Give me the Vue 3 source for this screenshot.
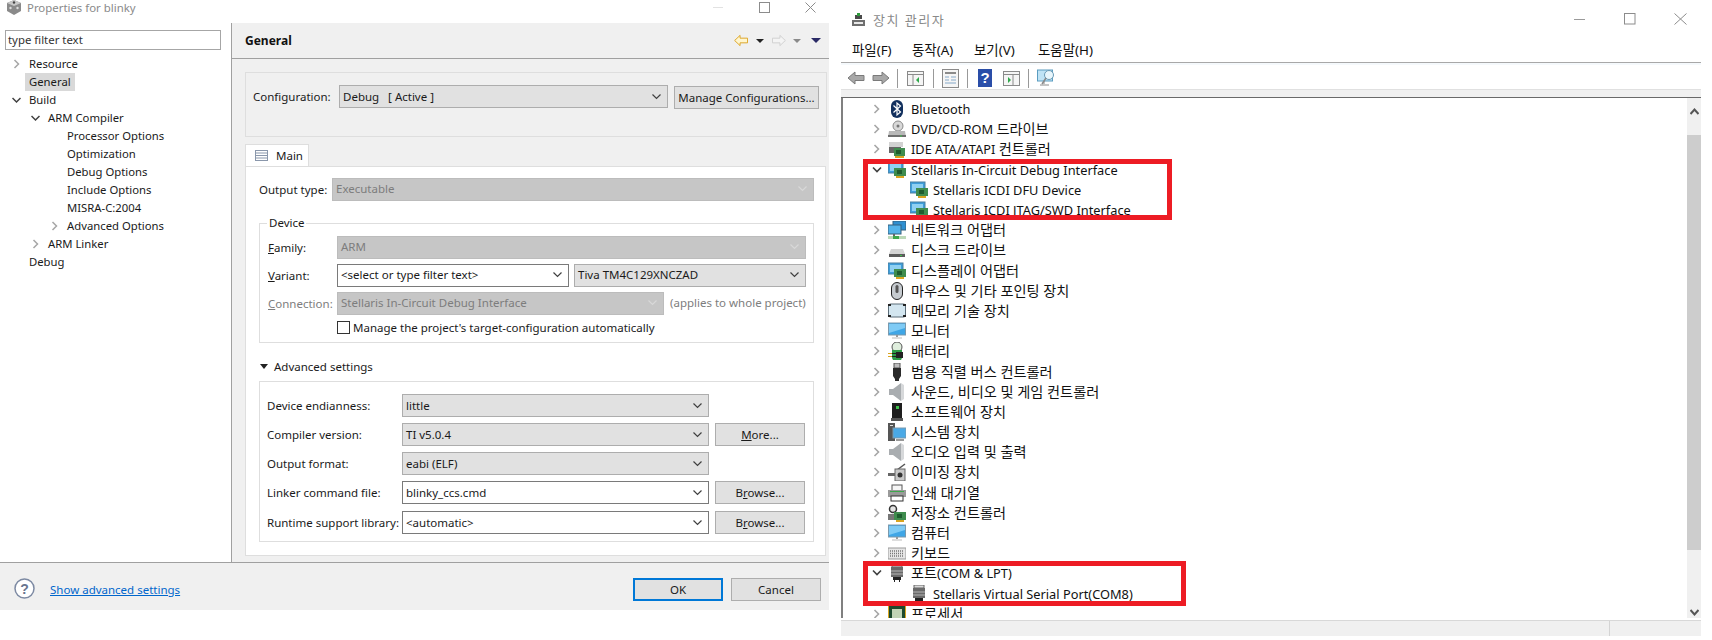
<script setup>
const tree = [
  { t: 'Resource', d: 0, c: 'r' },
  { t: 'General', d: 0, sel: true },
  { t: 'Build', d: 0, c: 'd' },
  { t: 'ARM Compiler', d: 1, c: 'd' },
  { t: 'Processor Options', d: 2 },
  { t: 'Optimization', d: 2 },
  { t: 'Debug Options', d: 2 },
  { t: 'Include Options', d: 2 },
  { t: 'MISRA-C:2004', d: 2 },
  { t: 'Advanced Options', d: 2, c: 'r' },
  { t: 'ARM Linker', d: 1, c: 'r' },
  { t: 'Debug', d: 0 }
]
const adv = [
  { l: 'Device endianness:', v: 'little', k: 'sel' },
  { l: 'Compiler version:', v: 'TI v5.0.4', k: 'sel', b: 'More' },
  { l: 'Output format:', v: 'eabi (ELF)', k: 'sel' },
  { l: 'Linker command file:', v: 'blinky_ccs.cmd', k: 'inp', b: 'Browse' },
  { l: 'Runtime support library:', v: '<automatic>', k: 'inp', b: 'Browse' }
]
const menus = ['파일(F)', '동작(A)', '보기(V)', '도움말(H)']
const devices = [
  { t: 'Bluetooth', i: 'bt' },
  { t: 'DVD/CD-ROM 드라이브', i: 'dvd' },
  { t: 'IDE ATA/ATAPI 컨트롤러', i: 'ide' },
  { t: 'Stellaris In-Circuit Debug Interface', i: 'card', open: true },
  { t: 'Stellaris ICDI DFU Device', i: 'card', child: true },
  { t: 'Stellaris ICDI JTAG/SWD Interface', i: 'card', child: true },
  { t: '네트워크 어댑터', i: 'net' },
  { t: '디스크 드라이브', i: 'disk' },
  { t: '디스플레이 어댑터', i: 'card' },
  { t: '마우스 및 기타 포인팅 장치', i: 'mouse' },
  { t: '메모리 기술 장치', i: 'mem' },
  { t: '모니터', i: 'mon' },
  { t: '배터리', i: 'bat' },
  { t: '범용 직렬 버스 컨트롤러', i: 'usb' },
  { t: '사운드, 비디오 및 게임 컨트롤러', i: 'spk' },
  { t: '소프트웨어 장치', i: 'soft' },
  { t: '시스템 장치', i: 'sys' },
  { t: '오디오 입력 및 출력', i: 'spk' },
  { t: '이미징 장치', i: 'cam' },
  { t: '인쇄 대기열', i: 'prn' },
  { t: '저장소 컨트롤러', i: 'stor' },
  { t: '컴퓨터', i: 'mon' },
  { t: '키보드', i: 'kbd' },
  { t: '포트(COM & LPT)', i: 'port', open: true },
  { t: 'Stellaris Virtual Serial Port(COM8)', i: 'port', child: true },
  { t: '프로세서', i: 'cpu' }
]
const segs = (t) => t.split(/([\uAC00-\uD7A3][\uAC00-\uD7A3 ,]*)/).filter(Boolean).map((s) => ({ s, ko: /[\uAC00-\uD7A3]/.test(s) }))
</script>

<template>
  <div class="page">
    <section class="props">
      <header class="titlebar">
        <svg class="logo" width="16" height="15" viewBox="0 0 16 15"><path d="M8 0l7 3v8l-7 4-7-4V3z" fill="#8a8a8a"/><path d="M8 6L1 3l7-3 7 3z" fill="#c8c8c8"/><circle cx="8" cy="2.5" r="1.2" fill="#444"/><circle cx="4.5" cy="8" r="1.2" fill="#ddd"/><circle cx="11.5" cy="8" r="1.2" fill="#ddd"/></svg>
        <span class="title-text">Properties for blinky</span>
        <div class="winctl">
          <svg width="11" height="11" viewBox="0 0 11 11"><path d="M0 5.5h10" stroke="#e2e2e2"/></svg>
          <svg width="11" height="11" viewBox="0 0 11 11"><rect x=".5" y=".5" width="10" height="10" fill="none" stroke="#8c8c8c"/></svg>
          <svg width="11" height="11" viewBox="0 0 11 11"><path d="M.5.5l10 10M10.5.5l-10 10" stroke="#8c8c8c"/></svg>
        </div>
      </header>
      <div class="main">
        <aside class="nav">
          <div class="filter">type filter text</div>
          <ul class="ptree">
            <li v-for="n in tree" :key="n.t" class="pnode" :class="'d' + n.d">
              <svg v-if="n.c === 'r'" class="tw" width="9" height="10" viewBox="0 0 9 10"><path d="M2.5 1l4 4-4 4" fill="none" stroke="#a6a6a6" stroke-width="1.5"/></svg>
              <svg v-else-if="n.c === 'd'" class="tw" width="9" height="10" viewBox="0 0 9 10"><path d="M.5 3l4 4 4-4" fill="none" stroke="#404040" stroke-width="1.5"/></svg>
              <span class="tw" v-else></span>
              <span class="plabel" :class="{ sel: n.sel }">{{ n.t }}</span>
            </li>
          </ul>
        </aside>
        <div class="pane">
          <div class="pane-head">
            <strong>General</strong>
            <div class="nav-icons">
              <svg width="14" height="13" viewBox="0 0 15 13"><path d="M.7 6.5L6.5 1v3h8v5h-8v3z" fill="#fff6cf" stroke="#dca21f"/></svg>
              <i class="drop"></i>
              <svg class="fwd" width="14" height="13" viewBox="0 0 15 13"><path d="M14.3 6.5L8.5 1v3h-8v5h8v3z" fill="#f4f4f4" stroke="#cfcfcf"/></svg>
              <i class="drop grey"></i>
              <i class="drop navy"></i>
            </div>
          </div>
          <div class="pane-body">
            <div class="config">
              <span class="config-label">Configuration:</span>
              <div class="field gray config-sel"><span>Debug&nbsp;&nbsp;&nbsp;[ Active ]</span><svg class="cv" width="9" height="6" viewBox="0 0 9 6"><path d="M.5.5l4 4 4-4" fill="none" stroke="#404040" stroke-width="1.2"/></svg></div>
              <button class="btn config-btn">Manage Configurations...</button>
            </div>
            <div class="tabs"><div class="tab">
              <svg width="13" height="11" viewBox="0 0 13 11"><rect x=".5" y=".5" width="12" height="10" fill="#fff" stroke="#8a97ab"/><path d="M1 3h11M1 5.500h11M1 8h11" stroke="#8a97ab"/></svg>
              <span>Main</span></div></div>
            <div class="panel">
              <div class="out-row">
                <span class="out-label">Output type:</span>
                <div class="field dis out-sel"><span>Executable</span><svg class="cv" width="9" height="6" viewBox="0 0 9 6"><path d="M.5.5l4 4 4-4" fill="none" stroke="#d8d8d8" stroke-width="1.2"/></svg></div>
              </div>
              <div class="group device">
                <span class="legend">Device</span>
                <div class="dev-grid">
                  <span class="lbl"><u>F</u>amily:</span>
                  <div class="field dis span2"><span>ARM</span><svg class="cv" width="9" height="6" viewBox="0 0 9 6"><path d="M.5.5l4 4 4-4" fill="none" stroke="#d8d8d8" stroke-width="1.2"/></svg></div>
                  <span class="lbl"><u>V</u>ariant:</span>
                  <div class="variant">
                    <div class="field white v1"><span>&lt;select or type filter text&gt;</span><svg class="cv" width="9" height="6" viewBox="0 0 9 6"><path d="M.5.5l4 4 4-4" fill="none" stroke="#404040" stroke-width="1.2"/></svg></div>
                    <div class="field gray v2"><span>Tiva TM4C129XNCZAD</span><svg class="cv" width="9" height="6" viewBox="0 0 9 6"><path d="M.5.5l4 4 4-4" fill="none" stroke="#404040" stroke-width="1.2"/></svg></div>
                  </div>
                  <span class="lbl muted"><u>C</u>onnection:</span>
                  <div class="variant">
                    <div class="field dis v3"><span>Stellaris In-Circuit Debug Interface</span><svg class="cv" width="9" height="6" viewBox="0 0 9 6"><path d="M.5.5l4 4 4-4" fill="none" stroke="#d8d8d8" stroke-width="1.2"/></svg></div>
                    <span class="muted applies">(applies to whole project)</span>
                  </div>
                </div>
                <div class="check"><i class="box"></i><span>Manage the project's target-configuration automatically</span></div>
              </div>
              <div class="adv-head"><i class="adv-tri"></i><span>Advanced settings</span></div>
              <div class="group adv">
                <div v-for="r in adv" :key="r.l" class="adv-row">
                  <span class="adv-label">{{ r.l }}</span>
                  <div class="field adv-field" :class="r.k === 'sel' ? 'gray' : 'white'"><span>{{ r.v }}</span><svg class="cv" width="9" height="6" viewBox="0 0 9 6"><path d="M.5.5l4 4 4-4" fill="none" stroke="#404040" stroke-width="1.2"/></svg></div>
                  <button v-if="r.b === 'More'" class="btn adv-btn"><u>M</u>ore...</button>
                  <button v-else-if="r.b" class="btn adv-btn">B<u>r</u>owse...</button>
                </div>
              </div>
            </div>
          </div>
        </div>
      </div>
      <footer class="foot">
        <svg class="help" width="21" height="21" viewBox="0 0 21 21"><circle cx="10.500" cy="10.500" r="9.500" fill="#fff" stroke="#7d8aa3" stroke-width="1.500"/><text x="10.500" y="15.500" text-anchor="middle" font-family="Liberation Sans, sans-serif" font-size="14" font-weight="700" fill="#68758f">?</text></svg>
        <a class="link">Show advanced settings</a>
        <button class="btn foot-btn ok">OK</button>
        <button class="btn foot-btn">Cancel</button>
      </footer>
    </section>

    <section class="devmgr">
      <header class="dm-title">
        <svg width="15" height="15" viewBox="0 0 15 15"><path d="M1 8h13v6H1z" fill="#6e6e6e"/><path d="M4 7V3h7v4z" fill="#4a4a4a"/><rect x="6" y="1" width="3" height="3" fill="#2d9c3c"/><rect x="3" y="10" width="9" height="2" fill="#e8e8e8"/></svg>
        <span class="dm-title-text">장치 관리자</span>
        <div class="dm-ctl">
          <svg width="12" height="12" viewBox="0 0 12 12"><path d="M0 6.500h11" stroke="#9a9a9a"/></svg>
          <svg width="12" height="12" viewBox="0 0 12 12"><rect x=".5" y=".5" width="10.500" height="10.500" fill="none" stroke="#8c8c8c"/></svg>
          <svg width="13" height="12" viewBox="0 0 13 12"><path d="M.5.500l12 11M12.500.5L.5 11.500" stroke="#8c8c8c"/></svg>
        </div>
      </header>
      <nav class="menu"><span v-for="m in menus" :key="m" class="menu-item">{{ m }}</span></nav>
      <div class="toolbar">
        <svg class="t1" width="18" height="14" viewBox="0 0 18 14"><path d="M1 7l7-6v3.500h9v5H8V13z" fill="#a8a8a8" stroke="#7a7a7a"/></svg>
        <svg class="t2" width="18" height="14" viewBox="0 0 18 14"><path d="M17 7l-7-6v3.500H1v5h9V13z" fill="#a8a8a8" stroke="#7a7a7a"/></svg>
        <i class="sep s1"></i>
        <svg class="t3" width="17" height="16" viewBox="0 0 17 16"><rect x=".5" y="1.500" width="16" height="14" fill="#f5f5f5" stroke="#8a8a8a"/><path d="M1 4.500h15M6 5v10" stroke="#8a8a8a"/><path d="M12 7v6l-3-3z" fill="#2fa84a"/></svg>
        <i class="sep s2"></i>
        <svg class="t4" width="17" height="19" viewBox="0 0 17 19"><rect x=".5" y=".5" width="16" height="18" fill="#f5f5f5" stroke="#8a8a8a"/><path d="M3 4h11" stroke="#8a8a8a" stroke-width="2"/><path d="M3 8h4M9 8h5M3 11h4M9 11h5M3 14h11" stroke="#86a9c9"/></svg>
        <i class="sep s3"></i>
        <svg class="t5" width="14" height="18" viewBox="0 0 14 18"><rect width="14" height="18" fill="#2a4ea8"/><text x="7" y="14" text-anchor="middle" font-family="Liberation Sans, sans-serif" font-size="15" font-weight="700" fill="#fff">?</text></svg>
        <svg class="t6" width="17" height="16" viewBox="0 0 17 16"><rect x=".5" y="1.500" width="16" height="14" fill="#f5f5f5" stroke="#8a8a8a"/><path d="M1 4.500h15M10 5v10" stroke="#8a8a8a"/><path d="M5 7v6l3-3z" fill="#2fa84a"/></svg>
        <i class="sep s4"></i>
        <svg class="t7" width="19" height="18" viewBox="0 0 19 18"><rect x=".5" y="1" width="15" height="11" fill="#bfe3f5" stroke="#5a9cc0"/><path d="M7 12v3M3 16h9" stroke="#8a8a8a"/><circle cx="12" cy="6" r="4.500" fill="#e8f6fc" stroke="#6a9ab5"/><path d="M9 9l-4 6" stroke="#8a8a8a" stroke-width="1.500"/></svg>
      </div>
      <div class="strip"></div>
      <div class="dm-body">
        <ul class="dtree">
          <li v-for="d in devices" :key="d.t" class="dnode" :class="{ child: d.child }">
            <span class="dtw" v-if="!d.child">
              <svg v-if="d.open" width="10" height="8" viewBox="0 0 10 8"><path d="M1 1.500l4 4 4-4" fill="none" stroke="#404040" stroke-width="1.600"/></svg>
              <svg v-else width="8" height="10" viewBox="0 0 8 10"><path d="M1.500 1l4 4-4 4" fill="none" stroke="#a6a6a6" stroke-width="1.600"/></svg>
            </span>
            <svg class="dicon" width="18" height="18" viewBox="0 0 18 18">
              <template v-if="d.i === 'bt'"><rect x="3" y="0" width="12" height="18" rx="6" fill="#12305e"/><path d="M5.500 5.500l7 6.500L9 15V3l3.500 3-7 6.500" fill="none" stroke="#fff" stroke-width="1.200"/></template>
              <template v-else-if="d.i === 'dvd'"><circle cx="10" cy="6" r="5" fill="#d8d8d8" stroke="#8a8a8a"/><circle cx="10" cy="6" r="1.500" fill="#777"/><path d="M1 11h16l1 6H0z" fill="#b8b8b8"/><path d="M0 15h18v2H0z" fill="#6e6e6e"/><rect x="12" y="15.500" width="2" height="1" fill="#3ec24c"/></template>
              <template v-else-if="d.i === 'ide'"><path d="M1 2h14v5H1z" fill="#d2d2d2"/><path d="M1 7h12v6H1z" fill="#666"/><rect x="6" y="8" width="11" height="8" fill="#3f8c4e"/><rect x="8" y="10" width="5" height="4" fill="#1f5d2f"/><path d="M7 16h9v2H7z" fill="#d9a520"/></template>
              <template v-else-if="d.i === 'card'"><rect x="0" y="1" width="15" height="11" fill="#3f9edb" stroke="#4a7f9f"/><rect x="2" y="3" width="11" height="7" fill="#8fd0f2"/><rect x="6" y="7" width="12" height="8" fill="#3f8c4e"/><rect x="9" y="9" width="5" height="4" fill="#1f5d2f"/><path d="M8 15h8v2H8z" fill="#d9a520"/></template>
              <template v-else-if="d.i === 'net'"><rect x="5" y="0" width="13" height="9" fill="#2f8fd0" stroke="#35607f"/><rect x="0" y="4" width="13" height="9" fill="#54b3ea" stroke="#35607f"/><path d="M6 13v2" stroke="#666" stroke-width="2"/><rect x="0" y="15" width="18" height="3" fill="#bcd9b8"/><rect x="5" y="15" width="6" height="3" fill="#3ea84d"/></template>
              <template v-else-if="d.i === 'disk'"><path d="M3 8h12l2 5H1z" fill="#d5d5d5"/><path d="M1 13h16v3H1z" fill="#5c5c5c"/><rect x="12" y="14" width="2" height="1" fill="#3ec24c"/></template>
              <template v-else-if="d.i === 'mouse'"><rect x="3.500" y="0.500" width="11" height="17" rx="5.500" fill="#c6cbd0" stroke="#222"/><rect x="7.500" y="3" width="3" height="8" rx="1.500" fill="#555"/></template>
              <template v-else-if="d.i === 'mem'"><rect x=".5" y="2" width="17" height="13" rx="2" fill="#d3e6f0" stroke="#5a6c78"/><path d="M0 2h3v2H0zM15 2h3v2h-3zM0 13h3v2H0zM15 13h3v2h-3z" fill="#222"/></template>
              <template v-else-if="d.i === 'mon'"><rect x=".5" y="1" width="17" height="12" fill="#3fa6e6" stroke="#7a99ad"/><path d="M1 2h16v4L1 11z" fill="#7fcbf5"/><path d="M9 13v2" stroke="#999" stroke-width="2"/><path d="M4 16h10" stroke="#bbb"/></template>
              <template v-else-if="d.i === 'bat'"><ellipse cx="9" cy="5" rx="5" ry="5" fill="#dfeedd" stroke="#555"/><path d="M4 8h10v7a4 4 0 0 1-10 0z" fill="#2e9b45"/><path d="M8 10h7v6H8zM0 11h8v1H0zM0 14h8v1H0z" fill="#222"/><path d="M0 11h4v1H0zM0 14h4v1H0z" fill="#d9a520"/></template>
              <template v-else-if="d.i === 'usb'"><rect x="6" y="0" width="6" height="5" fill="#bdbdbd" stroke="#555"/><path d="M5 5h8v8l-2 3v2H7v-2l-2-3z" fill="#2a2a2a"/></template>
              <template v-else-if="d.i === 'spk'"><path d="M1 6h4l8-6v18l-8-6H1z" fill="#a9adb0"/><path d="M13 0l3 2v14l-3 2z" fill="#d6d8da"/></template>
              <template v-else-if="d.i === 'soft'"><rect x="4" y="0" width="10" height="16" fill="#1e1e1e"/><rect x="8" y="3" width="3" height="3" fill="#3ec24c"/><rect x="3" y="15" width="12" height="3" fill="#555"/></template>
              <template v-else-if="d.i === 'sys'"><rect x="0" y="0" width="7" height="18" fill="#555"/><rect x="2" y="2" width="3" height="1" fill="#ddd"/><rect x="5" y="5" width="13" height="10" fill="#4aa9e6" stroke="#7a99ad"/><path d="M8 17h8" stroke="#999" stroke-width="2"/></template>
              <template v-else-if="d.i === 'cam'"><path d="M9 7l8-6" stroke="#555" stroke-width="1.500"/><rect x="0" y="10" width="8" height="3" fill="#666"/><rect x="7" y="6" width="10" height="12" fill="#c8c8c8" stroke="#666"/><circle cx="12" cy="12" r="2.500" fill="#333"/></template>
              <template v-else-if="d.i === 'prn'"><rect x="4" y="1" width="10" height="6" fill="#f6f6f6" stroke="#555"/><rect x="0" y="6" width="18" height="7" fill="#9a9a9a"/><rect x="2" y="7" width="14" height="1" fill="#3ea84d"/><rect x="3" y="12" width="12" height="5" fill="#fff" stroke="#333"/></template>
              <template v-else-if="d.i === 'stor'"><circle cx="5" cy="5" r="3.500" fill="#e4e4e4" stroke="#333" stroke-width="1.500"/><path d="M0 10h10v6H0z" fill="#777"/><rect x="6" y="8" width="12" height="8" fill="#3f8c4e"/><rect x="9" y="10" width="5" height="4" fill="#1f5d2f"/><path d="M8 16h8v2H8z" fill="#d9a520"/></template>
              <template v-else-if="d.i === 'kbd'"><rect x="0" y="4" width="18" height="11" fill="#e6e6e6" stroke="#999"/><path d="M2 7h14M2 9.500h14M2 12h14" stroke="#777" stroke-dasharray="1 1" stroke-width="1.500"/></template>
              <template v-else-if="d.i === 'port'"><rect x="4" y="0" width="10" height="3" fill="#d8d8d8" stroke="#666"/><rect x="3" y="3" width="12" height="10" fill="#6a6a6a"/><path d="M3 7h12M3 10h12" stroke="#b5b5b5"/><path d="M5 13h8v3H5zM6 16h1v2H6zM11 16h1v2h-1z" fill="#222"/></template>
              <template v-else-if="d.i === 'cpu'"><rect x="0" y="0" width="18" height="18" fill="#d9a520"/><rect x="1" y="1" width="16" height="16" fill="#1d4a2d"/><rect x="4" y="4" width="10" height="10" fill="#c2d4b5"/></template>
            </svg>
            <span class="dlabel"><span v-for="(p, k) in segs(d.t)" :key="k" :class="{ ko: p.ko }">{{ p.s }}</span></span>
          </li>
        </ul>
        <div class="scroll">
          <svg class="sup" width="9" height="7" viewBox="0 0 9 7"><path d="M.5 6l4-4.500 4 4.500" fill="none" stroke="#555" stroke-width="2"/></svg>
          <div class="thumb"></div>
          <svg class="sdn" width="9" height="7" viewBox="0 0 9 7"><path d="M.5 1l4 4.500 4-4.500" fill="none" stroke="#555" stroke-width="2"/></svg>
        </div>
        <div class="mark m1"></div>
        <div class="mark m2"></div>
      </div>
      <div class="status"><div class="st-a"></div><div class="st-b"></div></div>
    </section>
  </div>
</template>

<style>
html, body { margin: 0; background: #fff; }
</style>

<style scoped>
.page {
  width: 1712px; height: 640px; overflow: hidden; display: flex; gap: 12px; background: #fff;
  font-family: "Noto Sans", "Noto Sans CJK KR", sans-serif; font-size: 11.5px; color: #1a1a1a;
}
ul { list-style: none; margin: 0; padding: 0; }
u { text-decoration: underline; }
button { font: inherit; color: inherit; padding: 0; box-sizing: border-box; }
.props { width: 829px; flex: none; display: flex; flex-direction: column; }
.titlebar { height: 23px; flex: none; display: flex; position: relative; }
.logo { margin: 0 0 0 6px; }
.title-text { margin: 0 0 0 5px; color: #8a8a8a; font-size: 11.4px; line-height: 16px; height: 16px; }
.winctl { margin-left: auto; display: flex; gap: 35px; padding: 2px 13px 0 0; }
.main { height: 539px; flex: none; display: flex; }
.nav { width: 231px; flex: none; border-right: 1px solid #a0a0a0; padding-top: 7px; box-sizing: content-box; }
.filter { margin-left: 5px; width: 216px; height: 20px; box-sizing: border-box; border: 1px solid #a6a6a6; padding-left: 2px; line-height: 18px; font-size: 11.4px; color: #333; margin-bottom: 5px; }
.ptree { font-size: 11.3px; }
.pnode { height: 18px; display: flex; align-items: center; line-height: 18px; }
.d0 { padding-left: 12px; }
.d1 { padding-left: 31px; }
.d2 { padding-left: 50px; }
.tw { width: 9px; height: 10px; flex: none; margin-right: 4px; }
.plabel { padding: 0 4px; }
.plabel.sel { background: #d9d9d9; }
.pane { flex: 1; background: #f0f0f0; min-width: 0; }
.pane-head { height: 35px; border-bottom: 1px solid #a0a0a0; display: flex; align-items: center; padding-left: 13px; }
.pane-head strong { font-size: 12px; font-weight: 700; color: #111; }
.nav-icons { margin-left: auto; display: flex; align-items: center; padding-right: 8px; }
.drop { width: 0; height: 0; border: 4px solid transparent; border-top: 4px solid #222; border-bottom: 0; margin: 0 0 0 8px; }
.drop.grey { border-top-color: #8a8a8a; margin-left: 7px; }
.drop.navy { border-width: 5px 5px 0; border-top-color: #2a2a66; margin-left: 10px; }
.fwd { margin-left: 8px; }
.pane-body { padding: 13px 2px 0 13px; }
.config { height: 65px; box-sizing: border-box; border: 1px solid #dedede; padding: 12px 0 0 7px; display: flex; align-items: flex-start; }
.config-label { width: 86px; flex: none; line-height: 24px; }
.field { height: 23px; box-sizing: border-box; border: 1px solid #adadad; display: flex; align-items: center; justify-content: space-between; padding: 0 6px 1px 3px; line-height: 20px; white-space: nowrap; }
.gray { background: #e1e1e1; }
.dis { background: #c6c6c6; border-color: #bcbcbc; color: #7d7d7d; }
.white { background: #fff; border-color: #7a7a7a; }
.config-sel { width: 329px; flex: none; padding-bottom: 0; }
.btn { background: #e1e1e1; border: 1px solid #adadad; display: block; height: 23px; line-height: 20px; text-align: center; }
.config-btn { width: 145px; margin: 1px 0 0 6px; flex: none; }
.tabs { margin-top: 7px; height: 22px; display: flex; }
.tab { width: 64px; height: 22px; box-sizing: border-box; background: #fff; border: 1px solid #dedede; border-bottom: 0; display: flex; align-items: center; gap: 8px; padding-left: 9px; }
.panel { width: 581px; height: 390px; box-sizing: border-box; background: #fff; border: 1px solid #dedede; padding: 11px 11px 0 13px; margin-top: 0; }
.out-row { display: flex; }
.out-label { width: 73px; flex: none; line-height: 23px; }
.out-sel { width: 482px; }
.group { border: 1px solid #dedede; position: relative; width: 555px; box-sizing: border-box; }
.device { margin-top: 22px; height: 120px; padding: 12px 0 0 8px; }
.legend { position: absolute; left: 7px; top: -10px; background: #fff; padding: 0 2px; line-height: 18px; }
.dev-grid { display: grid; grid-template-columns: 69px 469px; row-gap: 5px; align-items: center; }
.lbl { line-height: 20px; }
.span2 { width: 469px; }
.variant { display: flex; }
.v1 { width: 232px; }
.v2 { width: 232px; margin-left: 5px; }
.v3 { width: 327px; }
.applies { margin-left: 6px; line-height: 22px; white-space: nowrap; }
.muted { color: #7d7d7d; }
.check { display: flex; align-items: center; margin: 6px 0 0 69px; gap: 3px; height: 13px; }
.box { width: 13px; height: 13px; box-sizing: border-box; border: 1px solid #333; background: #fff; flex: none; }
.adv-head { height: 18px; margin: 14px 0 6px; display: flex; align-items: center; padding-left: 1px; gap: 6px; }
.adv-tri { width: 0; height: 0; border: 4px solid transparent; border-top: 5px solid #222; border-bottom: 0; }
.adv { height: 161px; padding: 12px 0 0 7px; }
.adv-row { display: flex; height: 23px; margin-bottom: 6px; align-items: center; }
.adv-row:nth-child(4) { margin-bottom: 7px; }
.adv-label { width: 135px; flex: none; white-space: nowrap; line-height: 20px; }
.adv-field { width: 307px; flex: none; padding-bottom: 0; }
.adv-btn { width: 90px; margin-left: 6px; }
.foot { height: 41px; flex: none; padding-top: 6px; box-sizing: content-box; border-top: 1px solid #a0a0a0; background: #f0f0f0; display: flex; align-items: flex-start; padding-right: 8px; }
.help { margin: 9px 0 0 14px; }
.link { margin: 12px 0 0 15px; color: #0066cc; text-decoration: underline; font-size: 11.5px; line-height: 18px; }
.foot-btn { width: 90px; height: 23px; margin: 9px 0 0 8px; }
.ok { margin-left: auto; border: 2px solid #0078d7; }

.devmgr { width: 860px; flex: none; display: flex; flex-direction: column; height: 636px; }
.dm-title { height: 38px; flex: none; display: flex; align-items: center; }
.dm-title svg:first-child { margin-left: 10px; }
.dm-title-text { margin-left: 7px; color: #8a8a8a; font-size: 13px; letter-spacing: 1.5px; }
.dm-ctl { margin-left: auto; display: flex; gap: 38px; padding-right: 14px; }
.menu { height: 25px; flex: none; display: flex; padding-left: 11px; border-bottom: 1px solid #a8a8a8; box-sizing: border-box; }
.menu-item { font-size: 13.4px; line-height: 24px; color: #111; }
.menu-item:nth-child(1) { width: 60px; }
.menu-item:nth-child(2) { width: 62px; }
.menu-item:nth-child(3) { width: 64px; }
.toolbar { height: 26px; flex: none; box-sizing: border-box; border-top: 2px solid #f5f9fc; display: flex; align-items: center; padding: 2px 0 0 6px; }
.t2 { margin-left: 7px; }
.sep { width: 1px; height: 19px; background: #999; flex: none; }
.s1 { margin-left: 7px; }
.t3 { margin-left: 9px; }
.s2 { margin-left: 9px; }
.t4 { margin-left: 8px; }
.s3 { margin-left: 8px; }
.t5 { margin-left: 10px; }
.t6 { margin-left: 11px; }
.s4 { margin-left: 8px; }
.t7 { margin-left: 8px; }
.strip { flex: none; background: #f0f0f0; border-top: 1px solid #e0e0e0; border-bottom: 1px solid #696969; box-sizing: content-box; height: 7px; }
.dm-body { height: 520px; flex: none; display: flex; position: relative; border-left: 2px solid #808080; }
.dtree { flex: 1; padding-top: 1px; overflow: hidden; }
.dnode { height: 20.2px; display: flex; align-items: center; padding-left: 27px; white-space: nowrap; }
.dnode.child { padding-left: 67px; }
.dtw { width: 18px; margin-right: 2px; display: flex; align-items: center; justify-content: center; flex: none; margin-left: -2px; }
.dicon { flex: none; }
.dlabel { margin-left: 5px; font-size: 12.8px; color: #111; line-height: 20px; }
.ko { font-size: 14.2px; }
.scroll { width: 14px; flex: none; background: #f0f0f0; display: flex; flex-direction: column; align-items: center; }
.sup { margin-top: 10px; }
.thumb { width: 14px; height: 415px; margin-top: 20px; background: #cdcdcd; flex: none; }
.sdn { margin-top: 59px; }
.mark { position: absolute; border: 5px solid #ed1c24; box-sizing: border-box; pointer-events: none; }
.m1 { left: 20px; top: 61px; width: 309px; height: 61px; }
.m2 { left: 20px; top: 463px; width: 323px; height: 45px; }
.status { height: 15px; flex: none; margin-top: 2px; border-top: 1px solid #d8d8d8; background: #f0f0f0; display: flex; }
.st-a { width: 768px; border-right: 1px solid #d4d4d4; }
.st-b { flex: 1; }
</style>
